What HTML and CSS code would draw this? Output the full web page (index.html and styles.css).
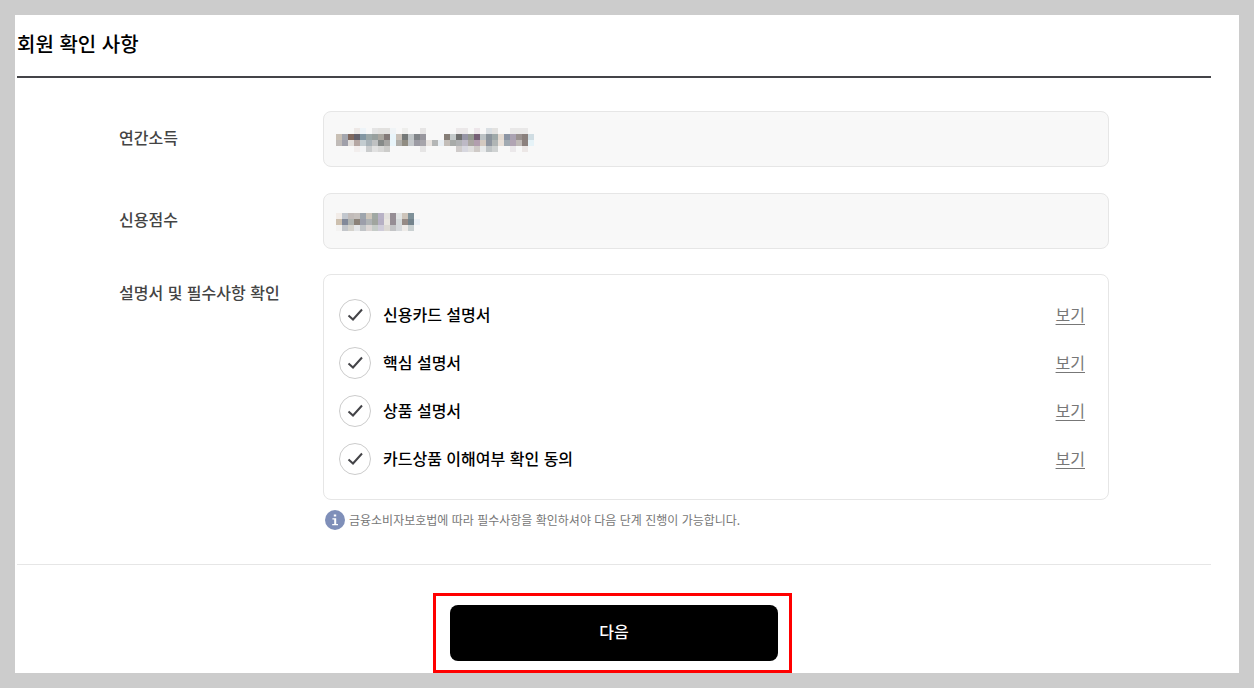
FILE: index.html
```html
<!DOCTYPE html>
<html lang="ko">
<head>
    <meta charset="UTF-8">
    <meta name="viewport" content="width=device-width, initial-scale=1.0">
    <title>회원 확인 사항</title>
    <link rel="stylesheet" href="styles.css">
</head>
<body>
    <main class="page">
        <h1 class="title">회원 확인 사항</h1>
        <form class="form">
            <div class="row">
                <label class="label" for="income">연간소득</label>
                <div class="field">
                    <input type="text" id="income" readonly>
                    <svg class="mosaic" id="incomeMask" width="198" height="24" aria-hidden="true"></svg>
                </div>
            </div>
            <div class="row">
                <label class="label" for="score">신용점수</label>
                <div class="field">
                    <input type="text" id="score" readonly>
                    <svg class="mosaic" id="scoreMask" width="84" height="18" aria-hidden="true"></svg>
                </div>
            </div>
            <div class="row row-docs">
                <span class="label">설명서 및 필수사항 확인</span>
                <div>
                    <ul class="docs">
                        <li>
                            <label class="doc"><span class="check"><input type="checkbox" checked><svg viewBox="0 0 32 32"><path d="M9.5 16.5l4.5 4 9-10"/></svg></span>신용카드 설명서</label>
                            <a href="#">보기</a>
                        </li>
                        <li>
                            <label class="doc"><span class="check"><input type="checkbox" checked><svg viewBox="0 0 32 32"><path d="M9.5 16.5l4.5 4 9-10"/></svg></span>핵심 설명서</label>
                            <a href="#">보기</a>
                        </li>
                        <li>
                            <label class="doc"><span class="check"><input type="checkbox" checked><svg viewBox="0 0 32 32"><path d="M9.5 16.5l4.5 4 9-10"/></svg></span>상품 설명서</label>
                            <a href="#">보기</a>
                        </li>
                        <li>
                            <label class="doc"><span class="check"><input type="checkbox" checked><svg viewBox="0 0 32 32"><path d="M9.5 16.5l4.5 4 9-10"/></svg></span>카드상품 이해여부 확인 동의</label>
                            <a href="#">보기</a>
                        </li>
                    </ul>
                    <p class="notice">
                        <svg width="20" height="20" viewBox="0 0 20 20" aria-hidden="true">
                            <circle cx="10" cy="10" r="10" fill="#7f8fb9"/>
                            <path d="M8.8 4.4h2.4v2.2H8.8zM7.4 8.3h3.8v5.7h1.8v1.3H7.2V14h2V9.6H7.4z" fill="#fff"/>
                        </svg>
                        금융소비자보호법에 따라 필수사항을 확인하셔야 다음 단계 진행이 가능합니다.
                    </p>
                </div>
            </div>
        </form>
        <div class="actions">
            <div class="next">
                <button type="button">다음</button>
                <span class="highlight"></span>
            </div>
        </div>
    </main>
    <script src="script.js"></script>
</body>
</html>
```
FILE: styles.css
```css
* { box-sizing: border-box; }
body { margin: 0; padding: 15px; background: #ccc; color: #000; font-family: "Noto Sans CJK KR", "Noto Sans", sans-serif; font-size: 16px; line-height: 24px; }
.page { background: #fff; padding: 0 28px 12px 2px; }
.title { margin: 0; padding: 14px 0 17px; border-bottom: 2px solid #444448; font-size: 20px; font-weight: 500; line-height: 30px; }
.form { padding: 33px 102px 34px; border-bottom: 1px solid #e6e6e6; }
.row { display: grid; grid-template-columns: 204px 1fr; align-items: center; margin-bottom: 26px; }
.row-docs { align-items: start; margin: -1px 0 0; }
.label { padding-bottom: 4px; color: #444; font-weight: 500; }
.row-docs .label { padding-top: 6px; }
.field { display: grid; align-items: center; }
.field input { grid-area: 1 / 1; width: 100%; height: 56px; margin: 0; padding: 0 12px; border: 1px solid #e6e6e6; border-radius: 8px; background: #f8f8f8; font: inherit; }
.mosaic { grid-area: 1 / 1; margin: 2px 0 0 13px; z-index: 1; }
.docs { display: grid; gap: 16px; list-style: none; margin: 0; padding: 24px 23px 24px 15px; border: 1px solid #e6e6e6; border-radius: 8px; line-height: 30px; }
.docs li { display: flex; justify-content: space-between; align-items: flex-start; }
.docs a { color: #777; text-decoration: underline; text-underline-offset: 3px; }
.doc { display: flex; align-items: flex-start; gap: 12px; font-weight: 500; }
.check { display: grid; width: 32px; height: 32px; }
.check input { grid-area: 1 / 1; appearance: none; width: 32px; height: 32px; margin: 0; border: 1px solid #ccc; border-radius: 50%; }
.check svg { grid-area: 1 / 1; fill: none; stroke: #444448; stroke-width: 2; pointer-events: none; }
.check input:not(:checked) + svg { display: none; }
.notice { display: flex; align-items: center; gap: 4px; margin: 10px 0 0; padding-left: 2px; color: #777; font-size: 12px; line-height: 20px; }
.notice svg { flex: none; }
.actions { display: flex; justify-content: center; padding-top: 40px; }
.next { position: relative; width: 328px; }
.next button { display: block; width: 100%; height: 56px; padding: 0 0 4px; border: 0; border-radius: 8px; background: #000; color: #fff; font: inherit; font-weight: 500; cursor: pointer; }
.highlight { position: absolute; inset: -12px -14px -12px -17px; border: 3px solid #f00; pointer-events: none; }
```
FILE: script.js
```js
// Pixelated values, one colour per 6px cell, "-" is an empty cell
const incomeCells = [
    '- - - ede8e6 eef4f8 - e4e4e4 e2e1df e2e1df f0f4f6 - eeeeec - - e6e5e5 - - - - - ebe8e9 ebe8e9 - ede6ea - dadfe3 e3e2e0 - - e9e8e8 e9e8e8 e9e8e8 -',
    'c9c0b5 a3a6ae 80695f 63616b 8297a3 9ca8a8 98a09e a9a69f 837a78 e9f5fa c8c0b7 747877 bfc4c6 808488 98979e - - - 867e77 c3c9ca 6f706f 9796a6 949890 755f75 bcc2c5 8b949c 9fa9a9 e3dad1 8c95a4 aaa2b2 9a9290 8a807d d0dde3',
    'c0bbb8 a0a0aa e2dfdc b5a7a3 c3ccd0 a8b2b8 bfc1c2 868a89 a5a4a2 e9f5fa b0afab 918d83 c4c8cb 9c9ba4 a7a5ab e8e3df b4b6b6 e9eff4 c3bdb8 a8aba9 b0b2b4 bdb9c5 aaa6a1 b29eae d3c9c0 8e95a0 b0b5b5 e8e0d9 a1aab2 b1a4b3 c0bab7 8c817e e6f3f8',
    '- - - f2eeed f3f4f5 cacccd e1e1e1 d8d8d7 ccccca - - - - - e6e5e5 - - - - - cfcbca d7d7df e0dfde cfcac7 e8eaeb bfc4c6 cfd2d2 - - ebe8ea - ece7e6 -'
];
const scoreCells = [
    'f2ece8 c2c7ce c1bbb9 c5c0bd 9ea5ad cec6bb a0a8a3 b8b2c6 e3e1de 968e95 e1e4e4 cdc4ba 7f9199 -',
    'cdc0af 828999 afb3b0 8b8279 9c9eaa afb3b5 a1a59f b6b0c4 e8e5e0 968e95 d5dadb 968b86 73838c ebf0f5',
    'f3f2f1 c3c6ca d5d3cd e4e6e8 c1c4c7 dcd6d5 c6ccc8 cfccd9 dcd9d4 c3c4c6 d6d9dc eeebe8 c9d0d1 -'
];

function drawMosaic(id, rows) {
    let rects = '';
    rows.forEach((row, y) => {
        row.split(' ').forEach((color, x) => {
            if (color !== '-') {
                rects += `<rect x="${x * 6}" y="${y * 6}" width="6" height="6" fill="#${color}"/>`;
            }
        });
    });
    document.getElementById(id).innerHTML = rects;
}

drawMosaic('incomeMask', incomeCells);
drawMosaic('scoreMask', scoreCells);
```
